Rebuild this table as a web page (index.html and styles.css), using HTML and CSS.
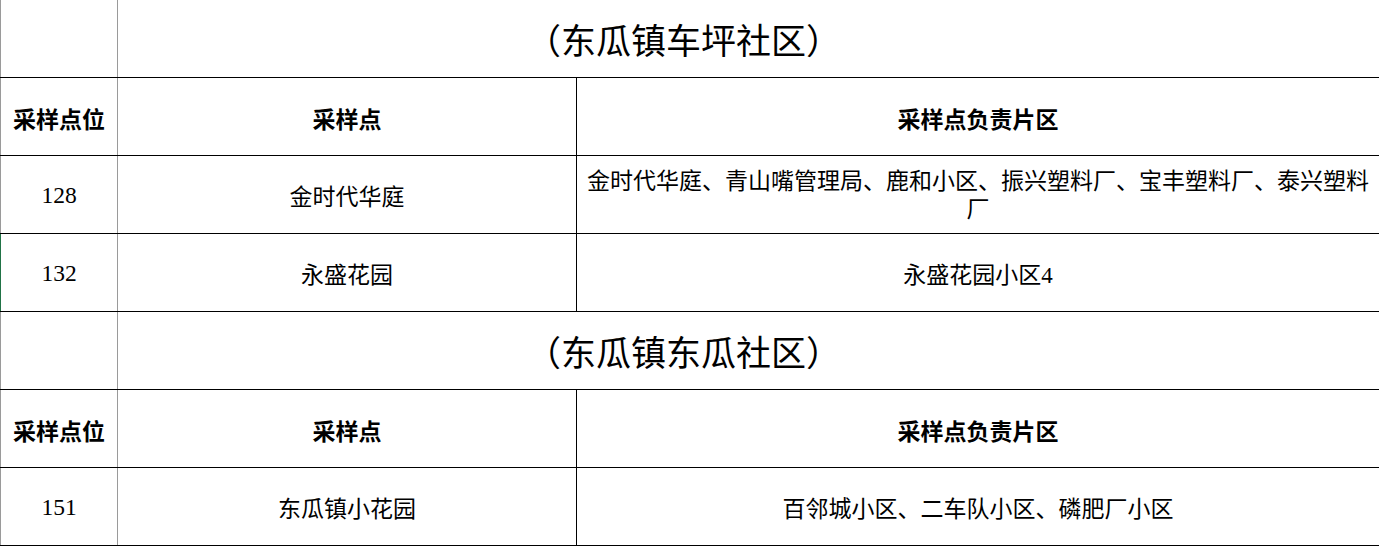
FILE: index.html
```html
<!DOCTYPE html>
<html lang="zh">
<head>
<meta charset="utf-8">
<link rel="stylesheet" href="styles.css">
</head>
<body>
<div class="sheet">
  <div class="row title-row">
    <div class="cell c1"></div>
    <div class="cell span title">（东瓜镇车坪社区）</div>
  </div>
  <div class="row head">
    <div class="cell c1">采样点位</div>
    <div class="cell c2">采样点</div>
    <div class="cell c3">采样点负责片区</div>
  </div>
  <div class="row">
    <div class="cell c1 num">128</div>
    <div class="cell c2">金时代华庭</div>
    <div class="cell c3 wrap">金时代华庭、青山嘴管理局、鹿和小区、振兴塑料厂、宝丰塑料厂、泰兴塑料厂</div>
  </div>
  <div class="row">
    <div class="cell c1 num selected">132</div>
    <div class="cell c2">永盛花园</div>
    <div class="cell c3">永盛花园小区4</div>
  </div>
  <div class="row title-row">
    <div class="cell c1"></div>
    <div class="cell span title">（东瓜镇东瓜社区）</div>
  </div>
  <div class="row head">
    <div class="cell c1">采样点位</div>
    <div class="cell c2">采样点</div>
    <div class="cell c3">采样点负责片区</div>
  </div>
  <div class="row">
    <div class="cell c1 num">151</div>
    <div class="cell c2">东瓜镇小花园</div>
    <div class="cell c3">百邻城小区、二车队小区、磷肥厂小区</div>
  </div>
</div>
</body>
</html>
```

FILE: styles.css
```css
html, body {
  margin: 0;
  padding: 0;
  background: #ffffff;
}
body {
  font-family: "Liberation Serif", "Noto Sans CJK SC", serif;
  color: #000000;
  font-size: 23px;
  overflow: hidden;
  text-spacing-trim: space-all;
}
.sheet {
  width: 1379px;
}
.row {
  display: grid;
  grid-template-columns: 118px 459px 1fr;
  height: 78px;
  box-sizing: border-box;
  border-bottom: 1px solid #000000;
}
.cell {
  display: flex;
  align-items: center;
  justify-content: center;
  text-align: center;
  box-sizing: border-box;
  min-width: 0;
}
.c1 {
  border-left: 1px solid #9a9a9a;
  border-right: 1px solid #9a9a9a;
}
.c1.selected {
  border-left-color: #217346;
}
.c2 {
  border-right: 1px solid #000000;
}
.span {
  grid-column: 2 / 4;
}
.title {
  font-family: "Noto Sans CJK SC", sans-serif;
  font-size: 35px;
  padding-right: 130px;
  padding-top: 0;
}
.head .cell {
  font-weight: 700;
  padding-top: 2px;
}
.num {
  padding-top: 2px;
  font-size: 23.5px;
}
.wrap {
  padding: 0 8px;
  line-height: 28px;
  padding-top: 2px;
}
```
